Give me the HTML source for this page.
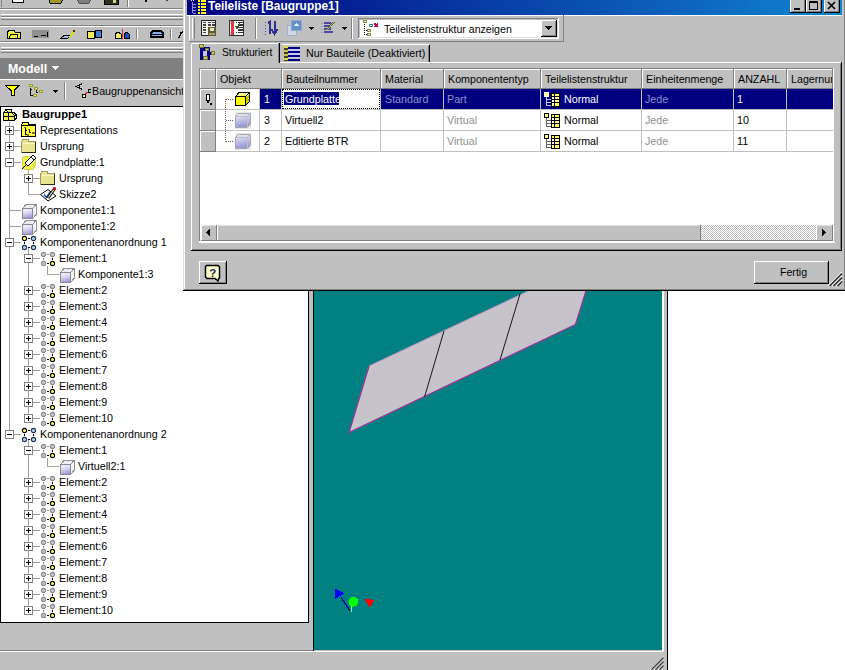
<!DOCTYPE html><html><head><meta charset="utf-8"><style>
html,body{margin:0;padding:0}
body{width:845px;height:670px;position:relative;overflow:hidden;background:#c0c0c0;font-family:"Liberation Sans",sans-serif}
div{position:absolute}
.t{white-space:nowrap;line-height:13px}
</style></head><body>
<div style="left:1px;top:0px;width:1px;height:7px;background:#808080;"></div>
<svg style="position:absolute;left:12px;top:0px" width="12" height="3" viewBox="0 0 12 3" shape-rendering="crispEdges"><rect x="0.5" y="-2" width="11" height="4" fill="#fff" stroke="#000"/></svg>
<svg style="position:absolute;left:49px;top:0px" width="15" height="4" viewBox="0 0 15 4" shape-rendering="crispEdges"><path d="M0 -1 L14 -1 L12 3 L1 3 Z" fill="#9a9a20" stroke="#000"/></svg>
<svg style="position:absolute;left:76px;top:0px" width="16" height="4" viewBox="0 0 16 4" shape-rendering="crispEdges"><path d="M1 -1 L15 -1 L13 3 L3 3 Z" fill="#808080" stroke="#505050"/></svg>
<svg style="position:absolute;left:104px;top:0px" width="15" height="5" viewBox="0 0 15 5" shape-rendering="crispEdges"><rect x="0.5" y="-2" width="14" height="6" fill="#303018" stroke="#000"/><rect x="9" y="0" width="3" height="3" fill="#d0d0a0"/></svg>
<div style="left:128px;top:0px;width:1px;height:7px;background:#fff;"></div>
<div style="left:127px;top:0px;width:1px;height:7px;background:#808080;"></div>
<div style="left:145px;top:0px;width:2px;height:2px;background:#000;"></div>
<div style="left:166px;top:0px;width:2px;height:1px;background:#404040;"></div>
<div style="left:0px;top:8px;width:183px;height:1px;background:#808080;"></div>
<div style="left:0px;top:9px;width:183px;height:1px;background:#fff;"></div>
<div style="left:1px;top:14px;width:182px;height:1px;background:#fff;"></div>
<div style="left:1px;top:16px;width:182px;height:1px;background:#808080;"></div>
<div style="left:1px;top:17px;width:182px;height:1px;background:#fff;"></div>
<div style="left:1px;top:19px;width:182px;height:1px;background:#808080;"></div>
<div style="left:0px;top:25px;width:183px;height:1px;background:#808080;"></div>
<div style="left:0px;top:26px;width:183px;height:1px;background:#fff;"></div>
<svg style="position:absolute;left:6px;top:29px" width="16" height="11" viewBox="0 0 16 11" shape-rendering="crispEdges"><path d="M1 3 L4 1 L8 1 L9 3 L14 3 L14 9 L1 9 Z" fill="#f0f040" stroke="#000"/><path d="M3 9 L5 5 L11 5 L11 9" fill="none" stroke="#000"/></svg>
<div style="left:32px;top:30px;width:17px;height:8px;background:#909090;"></div>
<svg style="position:absolute;left:32px;top:30px" width="17" height="8" viewBox="0 0 17 8" shape-rendering="crispEdges"><path d="M2 6 L6 6 M9 5 L14 5 M15 2 L15 7" stroke="#000" fill="none"/></svg>
<svg style="position:absolute;left:60px;top:29px" width="16" height="11" viewBox="0 0 16 11" shape-rendering="crispEdges"><path d="M1 9 L5 6 L11 6 L8 9 Z" fill="#a0c0f0" stroke="#000"/><path d="M10 8 L15 1" stroke="#e0e000" stroke-width="2"/><circle cx="14" cy="2" r="1.5" fill="#602000"/></svg>
<svg style="position:absolute;left:87px;top:29px" width="16" height="10" viewBox="0 0 16 10" shape-rendering="crispEdges"><rect x="0.5" y="2.5" width="7" height="7" fill="#f0f060" stroke="#000"/><rect x="8.5" y="1.5" width="6" height="7" fill="#4080d0" stroke="#000"/></svg>
<svg style="position:absolute;left:114px;top:29px" width="16" height="11" viewBox="0 0 16 11" shape-rendering="crispEdges"><path d="M1 9 L1 5 L4 3 L7 5 L7 9 Z" fill="#f0f060" stroke="#000"/><path d="M10 9 L10 5 L13 3 L15 5 L15 9 Z" fill="#2050c0" stroke="#000"/><rect x="8" y="0" width="1" height="10" fill="#e03030"/></svg>
<div style="left:136px;top:29px;width:1px;height:10px;background:#808080;"></div>
<div style="left:137px;top:29px;width:1px;height:10px;background:#fff;"></div>
<svg style="position:absolute;left:149px;top:29px" width="16" height="10" viewBox="0 0 16 10" shape-rendering="crispEdges"><path d="M2 8 L2 4 L4 2 L12 2 L14 4 L14 8 Z" fill="#80b0f0" stroke="#000" stroke-width="1.5"/><path d="M2 5 L14 5" stroke="#000"/></svg>
<div style="left:170px;top:29px;width:1px;height:10px;background:#808080;"></div>
<div style="left:171px;top:29px;width:1px;height:10px;background:#fff;"></div>
<svg style="position:absolute;left:178px;top:31px" width="6" height="8" viewBox="0 0 6 8" shape-rendering="crispEdges"><path d="M1 7 L3 2 L5 1" stroke="#000" stroke-width="1.5" fill="none"/></svg>
<div style="left:0px;top:41px;width:183px;height:1px;background:#808080;"></div>
<div style="left:0px;top:42px;width:183px;height:1px;background:#fff;"></div>
<div style="left:1px;top:47px;width:182px;height:1px;background:#fff;"></div>
<div style="left:1px;top:49px;width:182px;height:1px;background:#808080;"></div>
<div style="left:1px;top:50px;width:182px;height:1px;background:#fff;"></div>
<div style="left:1px;top:52px;width:182px;height:1px;background:#808080;"></div>
<div style="left:0px;top:58px;width:308px;height:21px;background:#808080;"></div>
<div class="t" style="left:8px;top:61px;font-size:12.4px;color:#fff;font-weight:bold;line-height:16px">Modell</div>
<svg style="position:absolute;left:51px;top:66px" width="10" height="5" viewBox="0 0 10 5" shape-rendering="crispEdges"><path d="M0 0 L9 0 L4.5 4 Z" fill="#fff"/></svg>
<div style="left:0px;top:79px;width:308px;height:1px;background:#fff;"></div>
<svg style="position:absolute;left:5px;top:85px" width="15" height="11" viewBox="0 0 15 11" shape-rendering="crispEdges"><path d="M0.5 0.5 L14 0.5 L9 5.5 L9 10.5 L6 10.5 L6 5.5 Z" fill="#ffff00" stroke="#000"/></svg>
<svg style="position:absolute;left:28px;top:83px" width="16" height="14" viewBox="0 0 16 14" shape-rendering="crispEdges"><rect x="1.5" y="1.5" width="3" height="2" fill="#f0f070" stroke="#989828"/><rect x="6.5" y="4.5" width="3" height="2" fill="#f0f070" stroke="#989828"/><rect x="11.5" y="7.5" width="3" height="2" fill="#f0f070" stroke="#989828"/><rect x="5.5" y="11.5" width="3" height="2" fill="#f0f070" stroke="#989828"/><path d="M2.5 5 L2.5 12.5 L5 12.5 M2.5 6 L4 6 M8.5 7 L8.5 9.5 L10 9.5" stroke="#000" fill="none"/></svg>
<svg style="position:absolute;left:52px;top:90px" width="7" height="4" viewBox="0 0 7 4" shape-rendering="crispEdges"><path d="M0 0 L6 0 L3 3 Z" fill="#000"/></svg>
<div style="left:64px;top:82px;width:1px;height:18px;background:#808080;"></div>
<div style="left:65px;top:82px;width:1px;height:18px;background:#fff;"></div>
<svg style="position:absolute;left:75px;top:83px" width="16" height="16" viewBox="0 0 16 16" shape-rendering="crispEdges"><path d="M7.5 0.5 L1 3.5 L7.5 6.5 M4 2 L4 5" stroke="#000" fill="none"/><rect x="13.5" y="6.5" width="3" height="3" fill="#60d0b0" stroke="#000"/><rect x="7.5" y="11.5" width="3" height="3" fill="#ffff80" stroke="#000"/><path d="M10.5 11 L13 9" stroke="#e02020" stroke-width="1.2"/></svg>
<div class="t" style="left:92px;top:85px;font-size:10.7px;color:#000;font-weight:normal;">Baugruppenansicht</div>
<div style="left:0px;top:106px;width:309px;height:517px;background:#fff;"></div>
<div style="left:0px;top:106px;width:309px;height:1px;background:#000;"></div>
<div style="left:0px;top:622px;width:309px;height:1px;background:#000;"></div>
<div style="left:0px;top:106px;width:1px;height:517px;background:#000;"></div>
<div style="left:308px;top:106px;width:1px;height:517px;background:#000;"></div>
<div style="left:9px;top:122px;width:1px;height:312px;background:#a0a0a0;"></div>
<div style="left:28px;top:167px;width:1px;height:27px;background:#a0a0a0;"></div>
<div style="left:28px;top:247px;width:1px;height:171px;background:#a0a0a0;"></div>
<div style="left:28px;top:439px;width:1px;height:171px;background:#a0a0a0;"></div>
<div style="left:47px;top:266px;width:1px;height:8px;background:#a0a0a0;"></div>
<div style="left:47px;top:458px;width:1px;height:8px;background:#a0a0a0;"></div>
<svg style="position:absolute;left:2px;top:108px" width="16" height="14" viewBox="0 0 16 14" shape-rendering="crispEdges"><path d="M1.5 4.5 L4 1.5 L9.5 1.5 L9.5 4.5 L12 4.5 L14.5 7 L14.5 10 L12 12.5 L1.5 12.5 Z" fill="#f0f060" stroke="#000"/><path d="M1.5 8.5 L12 8.5 M6.5 4.5 L6.5 12.5 M1.5 4.5 L9.5 4.5 L12 7 L12 12.5 M12 7 L14.5 7 M4 1.5 L6.5 4.5" stroke="#000" fill="none"/></svg>
<div class="t" style="left:22px;top:108px;font-size:11.2px;color:#000;font-weight:bold;">Baugruppe1</div>
<div style="left:9px;top:130px;width:12px;height:1px;background:#a0a0a0;"></div>
<div style="left:5px;top:126px;width:9px;height:9px;background:#fff;box-sizing:border-box;border:1px solid #808080"></div>
<div style="left:7px;top:130px;width:5px;height:1px;background:#000;"></div>
<div style="left:9px;top:128px;width:1px;height:5px;background:#000;"></div>
<svg style="position:absolute;left:21px;top:122px" width="16" height="16" viewBox="0 0 16 16" shape-rendering="crispEdges"><path d="M0.5 2.5 L2 0.5 L7 0.5 L8 2.5 L14.5 2.5 L14.5 14.5 L0.5 14.5 Z" fill="#ffff40" stroke="#000"/><path d="M1 3.5 L14 3.5" stroke="#000"/><path d="M4 6 L4 12 L6 12 M4 8 L6 8" stroke="#000" fill="none"/><rect x="3" y="5" width="2" height="1" fill="#807020"/><rect x="7" y="7" width="2" height="1" fill="#807020"/><rect x="11" y="10" width="3" height="2" fill="#807020"/><rect x="6" y="12" width="2" height="2" fill="#807020"/><path d="M8 8 L8 10 L10 10" stroke="#000" fill="none"/></svg>
<div class="t" style="left:40px;top:124px;font-size:10.7px;color:#000;font-weight:normal;">Representations</div>
<div style="left:9px;top:146px;width:12px;height:1px;background:#a0a0a0;"></div>
<div style="left:5px;top:142px;width:9px;height:9px;background:#fff;box-sizing:border-box;border:1px solid #808080"></div>
<div style="left:7px;top:146px;width:5px;height:1px;background:#000;"></div>
<div style="left:9px;top:144px;width:1px;height:5px;background:#000;"></div>
<svg style="position:absolute;left:21px;top:139px" width="16" height="14" viewBox="0 0 16 14" shape-rendering="crispEdges"><path d="M0.5 2.5 L2 0.5 L7 0.5 L8 2.5 L14.5 2.5 L14.5 13.5 L0.5 13.5 Z" fill="#e8e490" stroke="#a09860"/><path d="M14.5 3 L14.5 13.5 L1 13.5" stroke="#302810" fill="none" stroke-width="1.2"/><path d="M1.5 4.5 L13.5 4.5" stroke="#fff8c0"/></svg>
<div class="t" style="left:40px;top:140px;font-size:10.7px;color:#000;font-weight:normal;">Ursprung</div>
<div style="left:9px;top:162px;width:12px;height:1px;background:#a0a0a0;"></div>
<div style="left:5px;top:158px;width:9px;height:9px;background:#fff;box-sizing:border-box;border:1px solid #808080"></div>
<div style="left:7px;top:162px;width:5px;height:1px;background:#000;"></div>
<svg style="position:absolute;left:21px;top:155px" width="15" height="15" viewBox="0 0 15 15" shape-rendering="crispEdges"><path d="M3 1 L12 1 L14 3 L14 11 L12 14 L3 14 L1 12 L1 3 Z" fill="#f0f050" stroke="#d0d040"/><path d="M1 14 L14 1" stroke="#000" stroke-width="1"/><path d="M4 8 L10 2 L13 5 L7 11 Z" fill="#fff" stroke="#000"/><path d="M10 2 L12 0 L15 3 L13 5" fill="#fff" stroke="#000"/></svg>
<div class="t" style="left:40px;top:156px;font-size:10.7px;color:#000;font-weight:normal;">Grundplatte:1</div>
<div style="left:28px;top:178px;width:12px;height:1px;background:#a0a0a0;"></div>
<div style="left:24px;top:174px;width:9px;height:9px;background:#fff;box-sizing:border-box;border:1px solid #808080"></div>
<div style="left:26px;top:178px;width:5px;height:1px;background:#000;"></div>
<div style="left:28px;top:176px;width:1px;height:5px;background:#000;"></div>
<svg style="position:absolute;left:40px;top:171px" width="16" height="14" viewBox="0 0 16 14" shape-rendering="crispEdges"><path d="M0.5 2.5 L2 0.5 L7 0.5 L8 2.5 L14.5 2.5 L14.5 13.5 L0.5 13.5 Z" fill="#e8e490" stroke="#a09860"/><path d="M14.5 3 L14.5 13.5 L1 13.5" stroke="#302810" fill="none" stroke-width="1.2"/><path d="M1.5 4.5 L13.5 4.5" stroke="#fff8c0"/></svg>
<div class="t" style="left:59px;top:172px;font-size:10.7px;color:#000;font-weight:normal;">Ursprung</div>
<div style="left:28px;top:194px;width:12px;height:1px;background:#a0a0a0;"></div>
<svg style="position:absolute;left:40px;top:187px" width="17" height="15" viewBox="0 0 17 15" shape-rendering="crispEdges"><path d="M0.5 7.5 L8 2.5 L16 9 L8 14 Z" fill="#fff" stroke="#000" shape-rendering="geometricPrecision"/><path d="M4 7.5 L6.5 10.5 L10 5" stroke="#2050b0" stroke-width="1.5" fill="none" shape-rendering="geometricPrecision"/><path d="M8 11 L14 2.5" stroke="#000" stroke-width="3" shape-rendering="geometricPrecision"/><path d="M8.3 10.5 L14 2.5" stroke="#f0e8b0" stroke-width="1.2" shape-rendering="geometricPrecision"/><circle cx="14.5" cy="1.8" r="1.8" fill="#c01818" shape-rendering="geometricPrecision"/></svg>
<div class="t" style="left:59px;top:188px;font-size:10.7px;color:#000;font-weight:normal;">Skizze2</div>
<div style="left:9px;top:210px;width:12px;height:1px;background:#a0a0a0;"></div>
<svg style="position:absolute;left:21px;top:204px" width="16" height="15" viewBox="0 0 16 15" shape-rendering="crispEdges"><defs><linearGradient id="cg_22" x1="0" y1="0" x2="0.25" y2="1"><stop offset="0" stop-color="#fafafe"/><stop offset="0.5" stop-color="#dcdaf0"/><stop offset="1" stop-color="#a49cd8"/></linearGradient></defs><path d="M1.5 4.5 L5 0.5 L15 0.5 L11.5 4.5 Z" fill="#ececf2" stroke="#909098"/><path d="M11.5 4.5 L15 0.5 L15 10.5 L11.5 14.5 Z" fill="#f4f4f8" stroke="#909098"/><rect x="1.5" y="4.5" width="10" height="10" fill="url(#cg_22)" stroke="#888894"/></svg>
<div class="t" style="left:40px;top:204px;font-size:10.7px;color:#000;font-weight:normal;">Komponente1:1</div>
<div style="left:9px;top:226px;width:12px;height:1px;background:#a0a0a0;"></div>
<svg style="position:absolute;left:21px;top:220px" width="16" height="15" viewBox="0 0 16 15" shape-rendering="crispEdges"><defs><linearGradient id="cg_23" x1="0" y1="0" x2="0.25" y2="1"><stop offset="0" stop-color="#fafafe"/><stop offset="0.5" stop-color="#dcdaf0"/><stop offset="1" stop-color="#a49cd8"/></linearGradient></defs><path d="M1.5 4.5 L5 0.5 L15 0.5 L11.5 4.5 Z" fill="#ececf2" stroke="#909098"/><path d="M11.5 4.5 L15 0.5 L15 10.5 L11.5 14.5 Z" fill="#f4f4f8" stroke="#909098"/><rect x="1.5" y="4.5" width="10" height="10" fill="url(#cg_23)" stroke="#888894"/></svg>
<div class="t" style="left:40px;top:220px;font-size:10.7px;color:#000;font-weight:normal;">Komponente1:2</div>
<div style="left:9px;top:242px;width:12px;height:1px;background:#a0a0a0;"></div>
<div style="left:5px;top:238px;width:9px;height:9px;background:#fff;box-sizing:border-box;border:1px solid #808080"></div>
<div style="left:7px;top:242px;width:5px;height:1px;background:#000;"></div>
<svg style="position:absolute;left:21px;top:235px" width="16" height="16" viewBox="0 0 16 16" shape-rendering="crispEdges"><circle cx="3.5" cy="3.5" r="2.1" fill="#ffff60" stroke="#000" stroke-width="1.1" shape-rendering="geometricPrecision"/><circle cx="12.5" cy="3.5" r="2.1" fill="#b8d8f0" stroke="#203050" stroke-width="1.1" shape-rendering="geometricPrecision"/><circle cx="3.5" cy="12.5" r="2.1" fill="#b8d8f0" stroke="#203050" stroke-width="1.1" shape-rendering="geometricPrecision"/><circle cx="12.5" cy="12.5" r="2.1" fill="#b8d8f0" stroke="#203050" stroke-width="1.1" shape-rendering="geometricPrecision"/><path d="M7 3 L9 3 M7 12 L9 12 M3 7 L3 9 M12 7 L12 9" stroke="#000"/></svg>
<div class="t" style="left:40px;top:236px;font-size:10.7px;color:#000;font-weight:normal;">Komponentenanordnung 1</div>
<div style="left:28px;top:258px;width:12px;height:1px;background:#a0a0a0;"></div>
<div style="left:24px;top:254px;width:9px;height:9px;background:#fff;box-sizing:border-box;border:1px solid #808080"></div>
<div style="left:26px;top:258px;width:5px;height:1px;background:#000;"></div>
<svg style="position:absolute;left:40px;top:251px" width="16" height="16" viewBox="0 0 16 16" shape-rendering="crispEdges"><circle cx="3.5" cy="3.5" r="2.1" fill="#c8c8c8" stroke="#8c8c8c" stroke-width="1.1" shape-rendering="geometricPrecision"/><circle cx="12.5" cy="3.5" r="2.1" fill="#c8c8c8" stroke="#8c8c8c" stroke-width="1.1" shape-rendering="geometricPrecision"/><circle cx="3.5" cy="12.5" r="2.1" fill="#c8c8c8" stroke="#8c8c8c" stroke-width="1.1" shape-rendering="geometricPrecision"/><circle cx="12.5" cy="12.5" r="2.1" fill="#ffff40" stroke="#000" stroke-width="1.1" shape-rendering="geometricPrecision"/><path d="M7 3 L9 3 M3 7 L3 9" stroke="#909090"/><path d="M7 12 L9 12 M12 7 L12 9" stroke="#000"/></svg>
<div class="t" style="left:59px;top:252px;font-size:10.7px;color:#000;font-weight:normal;">Element:1</div>
<div style="left:47px;top:274px;width:12px;height:1px;background:#a0a0a0;"></div>
<svg style="position:absolute;left:59px;top:268px" width="16" height="15" viewBox="0 0 16 15" shape-rendering="crispEdges"><defs><linearGradient id="cg_26" x1="0" y1="0" x2="0.25" y2="1"><stop offset="0" stop-color="#fafafe"/><stop offset="0.5" stop-color="#dcdaf0"/><stop offset="1" stop-color="#a49cd8"/></linearGradient></defs><path d="M1.5 4.5 L5 0.5 L15 0.5 L11.5 4.5 Z" fill="#ececf2" stroke="#909098"/><path d="M11.5 4.5 L15 0.5 L15 10.5 L11.5 14.5 Z" fill="#f4f4f8" stroke="#909098"/><rect x="1.5" y="4.5" width="10" height="10" fill="url(#cg_26)" stroke="#888894"/></svg>
<div class="t" style="left:78px;top:268px;font-size:10.7px;color:#000;font-weight:normal;">Komponente1:3</div>
<div style="left:28px;top:290px;width:12px;height:1px;background:#a0a0a0;"></div>
<div style="left:24px;top:286px;width:9px;height:9px;background:#fff;box-sizing:border-box;border:1px solid #808080"></div>
<div style="left:26px;top:290px;width:5px;height:1px;background:#000;"></div>
<div style="left:28px;top:288px;width:1px;height:5px;background:#000;"></div>
<svg style="position:absolute;left:40px;top:283px" width="16" height="16" viewBox="0 0 16 16" shape-rendering="crispEdges"><circle cx="3.5" cy="3.5" r="2.1" fill="#c8c8c8" stroke="#8c8c8c" stroke-width="1.1" shape-rendering="geometricPrecision"/><circle cx="12.5" cy="3.5" r="2.1" fill="#c8c8c8" stroke="#8c8c8c" stroke-width="1.1" shape-rendering="geometricPrecision"/><circle cx="3.5" cy="12.5" r="2.1" fill="#c8c8c8" stroke="#8c8c8c" stroke-width="1.1" shape-rendering="geometricPrecision"/><circle cx="12.5" cy="12.5" r="2.1" fill="#ffff40" stroke="#000" stroke-width="1.1" shape-rendering="geometricPrecision"/><path d="M7 3 L9 3 M3 7 L3 9" stroke="#909090"/><path d="M7 12 L9 12 M12 7 L12 9" stroke="#000"/></svg>
<div class="t" style="left:59px;top:284px;font-size:10.7px;color:#000;font-weight:normal;">Element:2</div>
<div style="left:28px;top:306px;width:12px;height:1px;background:#a0a0a0;"></div>
<div style="left:24px;top:302px;width:9px;height:9px;background:#fff;box-sizing:border-box;border:1px solid #808080"></div>
<div style="left:26px;top:306px;width:5px;height:1px;background:#000;"></div>
<div style="left:28px;top:304px;width:1px;height:5px;background:#000;"></div>
<svg style="position:absolute;left:40px;top:299px" width="16" height="16" viewBox="0 0 16 16" shape-rendering="crispEdges"><circle cx="3.5" cy="3.5" r="2.1" fill="#c8c8c8" stroke="#8c8c8c" stroke-width="1.1" shape-rendering="geometricPrecision"/><circle cx="12.5" cy="3.5" r="2.1" fill="#c8c8c8" stroke="#8c8c8c" stroke-width="1.1" shape-rendering="geometricPrecision"/><circle cx="3.5" cy="12.5" r="2.1" fill="#c8c8c8" stroke="#8c8c8c" stroke-width="1.1" shape-rendering="geometricPrecision"/><circle cx="12.5" cy="12.5" r="2.1" fill="#ffff40" stroke="#000" stroke-width="1.1" shape-rendering="geometricPrecision"/><path d="M7 3 L9 3 M3 7 L3 9" stroke="#909090"/><path d="M7 12 L9 12 M12 7 L12 9" stroke="#000"/></svg>
<div class="t" style="left:59px;top:300px;font-size:10.7px;color:#000;font-weight:normal;">Element:3</div>
<div style="left:28px;top:322px;width:12px;height:1px;background:#a0a0a0;"></div>
<div style="left:24px;top:318px;width:9px;height:9px;background:#fff;box-sizing:border-box;border:1px solid #808080"></div>
<div style="left:26px;top:322px;width:5px;height:1px;background:#000;"></div>
<div style="left:28px;top:320px;width:1px;height:5px;background:#000;"></div>
<svg style="position:absolute;left:40px;top:315px" width="16" height="16" viewBox="0 0 16 16" shape-rendering="crispEdges"><circle cx="3.5" cy="3.5" r="2.1" fill="#c8c8c8" stroke="#8c8c8c" stroke-width="1.1" shape-rendering="geometricPrecision"/><circle cx="12.5" cy="3.5" r="2.1" fill="#c8c8c8" stroke="#8c8c8c" stroke-width="1.1" shape-rendering="geometricPrecision"/><circle cx="3.5" cy="12.5" r="2.1" fill="#c8c8c8" stroke="#8c8c8c" stroke-width="1.1" shape-rendering="geometricPrecision"/><circle cx="12.5" cy="12.5" r="2.1" fill="#ffff40" stroke="#000" stroke-width="1.1" shape-rendering="geometricPrecision"/><path d="M7 3 L9 3 M3 7 L3 9" stroke="#909090"/><path d="M7 12 L9 12 M12 7 L12 9" stroke="#000"/></svg>
<div class="t" style="left:59px;top:316px;font-size:10.7px;color:#000;font-weight:normal;">Element:4</div>
<div style="left:28px;top:338px;width:12px;height:1px;background:#a0a0a0;"></div>
<div style="left:24px;top:334px;width:9px;height:9px;background:#fff;box-sizing:border-box;border:1px solid #808080"></div>
<div style="left:26px;top:338px;width:5px;height:1px;background:#000;"></div>
<div style="left:28px;top:336px;width:1px;height:5px;background:#000;"></div>
<svg style="position:absolute;left:40px;top:331px" width="16" height="16" viewBox="0 0 16 16" shape-rendering="crispEdges"><circle cx="3.5" cy="3.5" r="2.1" fill="#c8c8c8" stroke="#8c8c8c" stroke-width="1.1" shape-rendering="geometricPrecision"/><circle cx="12.5" cy="3.5" r="2.1" fill="#c8c8c8" stroke="#8c8c8c" stroke-width="1.1" shape-rendering="geometricPrecision"/><circle cx="3.5" cy="12.5" r="2.1" fill="#c8c8c8" stroke="#8c8c8c" stroke-width="1.1" shape-rendering="geometricPrecision"/><circle cx="12.5" cy="12.5" r="2.1" fill="#ffff40" stroke="#000" stroke-width="1.1" shape-rendering="geometricPrecision"/><path d="M7 3 L9 3 M3 7 L3 9" stroke="#909090"/><path d="M7 12 L9 12 M12 7 L12 9" stroke="#000"/></svg>
<div class="t" style="left:59px;top:332px;font-size:10.7px;color:#000;font-weight:normal;">Element:5</div>
<div style="left:28px;top:354px;width:12px;height:1px;background:#a0a0a0;"></div>
<div style="left:24px;top:350px;width:9px;height:9px;background:#fff;box-sizing:border-box;border:1px solid #808080"></div>
<div style="left:26px;top:354px;width:5px;height:1px;background:#000;"></div>
<div style="left:28px;top:352px;width:1px;height:5px;background:#000;"></div>
<svg style="position:absolute;left:40px;top:347px" width="16" height="16" viewBox="0 0 16 16" shape-rendering="crispEdges"><circle cx="3.5" cy="3.5" r="2.1" fill="#c8c8c8" stroke="#8c8c8c" stroke-width="1.1" shape-rendering="geometricPrecision"/><circle cx="12.5" cy="3.5" r="2.1" fill="#c8c8c8" stroke="#8c8c8c" stroke-width="1.1" shape-rendering="geometricPrecision"/><circle cx="3.5" cy="12.5" r="2.1" fill="#c8c8c8" stroke="#8c8c8c" stroke-width="1.1" shape-rendering="geometricPrecision"/><circle cx="12.5" cy="12.5" r="2.1" fill="#ffff40" stroke="#000" stroke-width="1.1" shape-rendering="geometricPrecision"/><path d="M7 3 L9 3 M3 7 L3 9" stroke="#909090"/><path d="M7 12 L9 12 M12 7 L12 9" stroke="#000"/></svg>
<div class="t" style="left:59px;top:348px;font-size:10.7px;color:#000;font-weight:normal;">Element:6</div>
<div style="left:28px;top:370px;width:12px;height:1px;background:#a0a0a0;"></div>
<div style="left:24px;top:366px;width:9px;height:9px;background:#fff;box-sizing:border-box;border:1px solid #808080"></div>
<div style="left:26px;top:370px;width:5px;height:1px;background:#000;"></div>
<div style="left:28px;top:368px;width:1px;height:5px;background:#000;"></div>
<svg style="position:absolute;left:40px;top:363px" width="16" height="16" viewBox="0 0 16 16" shape-rendering="crispEdges"><circle cx="3.5" cy="3.5" r="2.1" fill="#c8c8c8" stroke="#8c8c8c" stroke-width="1.1" shape-rendering="geometricPrecision"/><circle cx="12.5" cy="3.5" r="2.1" fill="#c8c8c8" stroke="#8c8c8c" stroke-width="1.1" shape-rendering="geometricPrecision"/><circle cx="3.5" cy="12.5" r="2.1" fill="#c8c8c8" stroke="#8c8c8c" stroke-width="1.1" shape-rendering="geometricPrecision"/><circle cx="12.5" cy="12.5" r="2.1" fill="#ffff40" stroke="#000" stroke-width="1.1" shape-rendering="geometricPrecision"/><path d="M7 3 L9 3 M3 7 L3 9" stroke="#909090"/><path d="M7 12 L9 12 M12 7 L12 9" stroke="#000"/></svg>
<div class="t" style="left:59px;top:364px;font-size:10.7px;color:#000;font-weight:normal;">Element:7</div>
<div style="left:28px;top:386px;width:12px;height:1px;background:#a0a0a0;"></div>
<div style="left:24px;top:382px;width:9px;height:9px;background:#fff;box-sizing:border-box;border:1px solid #808080"></div>
<div style="left:26px;top:386px;width:5px;height:1px;background:#000;"></div>
<div style="left:28px;top:384px;width:1px;height:5px;background:#000;"></div>
<svg style="position:absolute;left:40px;top:379px" width="16" height="16" viewBox="0 0 16 16" shape-rendering="crispEdges"><circle cx="3.5" cy="3.5" r="2.1" fill="#c8c8c8" stroke="#8c8c8c" stroke-width="1.1" shape-rendering="geometricPrecision"/><circle cx="12.5" cy="3.5" r="2.1" fill="#c8c8c8" stroke="#8c8c8c" stroke-width="1.1" shape-rendering="geometricPrecision"/><circle cx="3.5" cy="12.5" r="2.1" fill="#c8c8c8" stroke="#8c8c8c" stroke-width="1.1" shape-rendering="geometricPrecision"/><circle cx="12.5" cy="12.5" r="2.1" fill="#ffff40" stroke="#000" stroke-width="1.1" shape-rendering="geometricPrecision"/><path d="M7 3 L9 3 M3 7 L3 9" stroke="#909090"/><path d="M7 12 L9 12 M12 7 L12 9" stroke="#000"/></svg>
<div class="t" style="left:59px;top:380px;font-size:10.7px;color:#000;font-weight:normal;">Element:8</div>
<div style="left:28px;top:402px;width:12px;height:1px;background:#a0a0a0;"></div>
<div style="left:24px;top:398px;width:9px;height:9px;background:#fff;box-sizing:border-box;border:1px solid #808080"></div>
<div style="left:26px;top:402px;width:5px;height:1px;background:#000;"></div>
<div style="left:28px;top:400px;width:1px;height:5px;background:#000;"></div>
<svg style="position:absolute;left:40px;top:395px" width="16" height="16" viewBox="0 0 16 16" shape-rendering="crispEdges"><circle cx="3.5" cy="3.5" r="2.1" fill="#c8c8c8" stroke="#8c8c8c" stroke-width="1.1" shape-rendering="geometricPrecision"/><circle cx="12.5" cy="3.5" r="2.1" fill="#c8c8c8" stroke="#8c8c8c" stroke-width="1.1" shape-rendering="geometricPrecision"/><circle cx="3.5" cy="12.5" r="2.1" fill="#c8c8c8" stroke="#8c8c8c" stroke-width="1.1" shape-rendering="geometricPrecision"/><circle cx="12.5" cy="12.5" r="2.1" fill="#ffff40" stroke="#000" stroke-width="1.1" shape-rendering="geometricPrecision"/><path d="M7 3 L9 3 M3 7 L3 9" stroke="#909090"/><path d="M7 12 L9 12 M12 7 L12 9" stroke="#000"/></svg>
<div class="t" style="left:59px;top:396px;font-size:10.7px;color:#000;font-weight:normal;">Element:9</div>
<div style="left:28px;top:418px;width:12px;height:1px;background:#a0a0a0;"></div>
<div style="left:24px;top:414px;width:9px;height:9px;background:#fff;box-sizing:border-box;border:1px solid #808080"></div>
<div style="left:26px;top:418px;width:5px;height:1px;background:#000;"></div>
<div style="left:28px;top:416px;width:1px;height:5px;background:#000;"></div>
<svg style="position:absolute;left:40px;top:411px" width="16" height="16" viewBox="0 0 16 16" shape-rendering="crispEdges"><circle cx="3.5" cy="3.5" r="2.1" fill="#c8c8c8" stroke="#8c8c8c" stroke-width="1.1" shape-rendering="geometricPrecision"/><circle cx="12.5" cy="3.5" r="2.1" fill="#c8c8c8" stroke="#8c8c8c" stroke-width="1.1" shape-rendering="geometricPrecision"/><circle cx="3.5" cy="12.5" r="2.1" fill="#c8c8c8" stroke="#8c8c8c" stroke-width="1.1" shape-rendering="geometricPrecision"/><circle cx="12.5" cy="12.5" r="2.1" fill="#ffff40" stroke="#000" stroke-width="1.1" shape-rendering="geometricPrecision"/><path d="M7 3 L9 3 M3 7 L3 9" stroke="#909090"/><path d="M7 12 L9 12 M12 7 L12 9" stroke="#000"/></svg>
<div class="t" style="left:59px;top:412px;font-size:10.7px;color:#000;font-weight:normal;">Element:10</div>
<div style="left:9px;top:434px;width:12px;height:1px;background:#a0a0a0;"></div>
<div style="left:5px;top:430px;width:9px;height:9px;background:#fff;box-sizing:border-box;border:1px solid #808080"></div>
<div style="left:7px;top:434px;width:5px;height:1px;background:#000;"></div>
<svg style="position:absolute;left:21px;top:427px" width="16" height="16" viewBox="0 0 16 16" shape-rendering="crispEdges"><circle cx="3.5" cy="3.5" r="2.1" fill="#ffff60" stroke="#000" stroke-width="1.1" shape-rendering="geometricPrecision"/><circle cx="12.5" cy="3.5" r="2.1" fill="#b8d8f0" stroke="#203050" stroke-width="1.1" shape-rendering="geometricPrecision"/><circle cx="3.5" cy="12.5" r="2.1" fill="#b8d8f0" stroke="#203050" stroke-width="1.1" shape-rendering="geometricPrecision"/><circle cx="12.5" cy="12.5" r="2.1" fill="#b8d8f0" stroke="#203050" stroke-width="1.1" shape-rendering="geometricPrecision"/><path d="M7 3 L9 3 M7 12 L9 12 M3 7 L3 9 M12 7 L12 9" stroke="#000"/></svg>
<div class="t" style="left:40px;top:428px;font-size:10.7px;color:#000;font-weight:normal;">Komponentenanordnung 2</div>
<div style="left:28px;top:450px;width:12px;height:1px;background:#a0a0a0;"></div>
<div style="left:24px;top:446px;width:9px;height:9px;background:#fff;box-sizing:border-box;border:1px solid #808080"></div>
<div style="left:26px;top:450px;width:5px;height:1px;background:#000;"></div>
<svg style="position:absolute;left:40px;top:443px" width="16" height="16" viewBox="0 0 16 16" shape-rendering="crispEdges"><circle cx="3.5" cy="3.5" r="2.1" fill="#c8c8c8" stroke="#8c8c8c" stroke-width="1.1" shape-rendering="geometricPrecision"/><circle cx="12.5" cy="3.5" r="2.1" fill="#c8c8c8" stroke="#8c8c8c" stroke-width="1.1" shape-rendering="geometricPrecision"/><circle cx="3.5" cy="12.5" r="2.1" fill="#c8c8c8" stroke="#8c8c8c" stroke-width="1.1" shape-rendering="geometricPrecision"/><circle cx="12.5" cy="12.5" r="2.1" fill="#ffff40" stroke="#000" stroke-width="1.1" shape-rendering="geometricPrecision"/><path d="M7 3 L9 3 M3 7 L3 9" stroke="#909090"/><path d="M7 12 L9 12 M12 7 L12 9" stroke="#000"/></svg>
<div class="t" style="left:59px;top:444px;font-size:10.7px;color:#000;font-weight:normal;">Element:1</div>
<div style="left:47px;top:466px;width:12px;height:1px;background:#a0a0a0;"></div>
<svg style="position:absolute;left:59px;top:460px" width="16" height="15" viewBox="0 0 16 15" shape-rendering="crispEdges"><defs><linearGradient id="cg_38" x1="0" y1="0" x2="0.25" y2="1"><stop offset="0" stop-color="#fafafe"/><stop offset="0.5" stop-color="#dcdaf0"/><stop offset="1" stop-color="#a49cd8"/></linearGradient></defs><path d="M1.5 4.5 L5 0.5 L15 0.5 L11.5 4.5 Z" fill="#ececf2" stroke="#909098"/><path d="M11.5 4.5 L15 0.5 L15 10.5 L11.5 14.5 Z" fill="#f4f4f8" stroke="#909098"/><rect x="1.5" y="4.5" width="10" height="10" fill="url(#cg_38)" stroke="#888894"/></svg>
<div class="t" style="left:78px;top:460px;font-size:10.7px;color:#000;font-weight:normal;">Virtuell2:1</div>
<div style="left:28px;top:482px;width:12px;height:1px;background:#a0a0a0;"></div>
<div style="left:24px;top:478px;width:9px;height:9px;background:#fff;box-sizing:border-box;border:1px solid #808080"></div>
<div style="left:26px;top:482px;width:5px;height:1px;background:#000;"></div>
<div style="left:28px;top:480px;width:1px;height:5px;background:#000;"></div>
<svg style="position:absolute;left:40px;top:475px" width="16" height="16" viewBox="0 0 16 16" shape-rendering="crispEdges"><circle cx="3.5" cy="3.5" r="2.1" fill="#c8c8c8" stroke="#8c8c8c" stroke-width="1.1" shape-rendering="geometricPrecision"/><circle cx="12.5" cy="3.5" r="2.1" fill="#c8c8c8" stroke="#8c8c8c" stroke-width="1.1" shape-rendering="geometricPrecision"/><circle cx="3.5" cy="12.5" r="2.1" fill="#c8c8c8" stroke="#8c8c8c" stroke-width="1.1" shape-rendering="geometricPrecision"/><circle cx="12.5" cy="12.5" r="2.1" fill="#ffff40" stroke="#000" stroke-width="1.1" shape-rendering="geometricPrecision"/><path d="M7 3 L9 3 M3 7 L3 9" stroke="#909090"/><path d="M7 12 L9 12 M12 7 L12 9" stroke="#000"/></svg>
<div class="t" style="left:59px;top:476px;font-size:10.7px;color:#000;font-weight:normal;">Element:2</div>
<div style="left:28px;top:498px;width:12px;height:1px;background:#a0a0a0;"></div>
<div style="left:24px;top:494px;width:9px;height:9px;background:#fff;box-sizing:border-box;border:1px solid #808080"></div>
<div style="left:26px;top:498px;width:5px;height:1px;background:#000;"></div>
<div style="left:28px;top:496px;width:1px;height:5px;background:#000;"></div>
<svg style="position:absolute;left:40px;top:491px" width="16" height="16" viewBox="0 0 16 16" shape-rendering="crispEdges"><circle cx="3.5" cy="3.5" r="2.1" fill="#c8c8c8" stroke="#8c8c8c" stroke-width="1.1" shape-rendering="geometricPrecision"/><circle cx="12.5" cy="3.5" r="2.1" fill="#c8c8c8" stroke="#8c8c8c" stroke-width="1.1" shape-rendering="geometricPrecision"/><circle cx="3.5" cy="12.5" r="2.1" fill="#c8c8c8" stroke="#8c8c8c" stroke-width="1.1" shape-rendering="geometricPrecision"/><circle cx="12.5" cy="12.5" r="2.1" fill="#ffff40" stroke="#000" stroke-width="1.1" shape-rendering="geometricPrecision"/><path d="M7 3 L9 3 M3 7 L3 9" stroke="#909090"/><path d="M7 12 L9 12 M12 7 L12 9" stroke="#000"/></svg>
<div class="t" style="left:59px;top:492px;font-size:10.7px;color:#000;font-weight:normal;">Element:3</div>
<div style="left:28px;top:514px;width:12px;height:1px;background:#a0a0a0;"></div>
<div style="left:24px;top:510px;width:9px;height:9px;background:#fff;box-sizing:border-box;border:1px solid #808080"></div>
<div style="left:26px;top:514px;width:5px;height:1px;background:#000;"></div>
<div style="left:28px;top:512px;width:1px;height:5px;background:#000;"></div>
<svg style="position:absolute;left:40px;top:507px" width="16" height="16" viewBox="0 0 16 16" shape-rendering="crispEdges"><circle cx="3.5" cy="3.5" r="2.1" fill="#c8c8c8" stroke="#8c8c8c" stroke-width="1.1" shape-rendering="geometricPrecision"/><circle cx="12.5" cy="3.5" r="2.1" fill="#c8c8c8" stroke="#8c8c8c" stroke-width="1.1" shape-rendering="geometricPrecision"/><circle cx="3.5" cy="12.5" r="2.1" fill="#c8c8c8" stroke="#8c8c8c" stroke-width="1.1" shape-rendering="geometricPrecision"/><circle cx="12.5" cy="12.5" r="2.1" fill="#ffff40" stroke="#000" stroke-width="1.1" shape-rendering="geometricPrecision"/><path d="M7 3 L9 3 M3 7 L3 9" stroke="#909090"/><path d="M7 12 L9 12 M12 7 L12 9" stroke="#000"/></svg>
<div class="t" style="left:59px;top:508px;font-size:10.7px;color:#000;font-weight:normal;">Element:4</div>
<div style="left:28px;top:530px;width:12px;height:1px;background:#a0a0a0;"></div>
<div style="left:24px;top:526px;width:9px;height:9px;background:#fff;box-sizing:border-box;border:1px solid #808080"></div>
<div style="left:26px;top:530px;width:5px;height:1px;background:#000;"></div>
<div style="left:28px;top:528px;width:1px;height:5px;background:#000;"></div>
<svg style="position:absolute;left:40px;top:523px" width="16" height="16" viewBox="0 0 16 16" shape-rendering="crispEdges"><circle cx="3.5" cy="3.5" r="2.1" fill="#c8c8c8" stroke="#8c8c8c" stroke-width="1.1" shape-rendering="geometricPrecision"/><circle cx="12.5" cy="3.5" r="2.1" fill="#c8c8c8" stroke="#8c8c8c" stroke-width="1.1" shape-rendering="geometricPrecision"/><circle cx="3.5" cy="12.5" r="2.1" fill="#c8c8c8" stroke="#8c8c8c" stroke-width="1.1" shape-rendering="geometricPrecision"/><circle cx="12.5" cy="12.5" r="2.1" fill="#ffff40" stroke="#000" stroke-width="1.1" shape-rendering="geometricPrecision"/><path d="M7 3 L9 3 M3 7 L3 9" stroke="#909090"/><path d="M7 12 L9 12 M12 7 L12 9" stroke="#000"/></svg>
<div class="t" style="left:59px;top:524px;font-size:10.7px;color:#000;font-weight:normal;">Element:5</div>
<div style="left:28px;top:546px;width:12px;height:1px;background:#a0a0a0;"></div>
<div style="left:24px;top:542px;width:9px;height:9px;background:#fff;box-sizing:border-box;border:1px solid #808080"></div>
<div style="left:26px;top:546px;width:5px;height:1px;background:#000;"></div>
<div style="left:28px;top:544px;width:1px;height:5px;background:#000;"></div>
<svg style="position:absolute;left:40px;top:539px" width="16" height="16" viewBox="0 0 16 16" shape-rendering="crispEdges"><circle cx="3.5" cy="3.5" r="2.1" fill="#c8c8c8" stroke="#8c8c8c" stroke-width="1.1" shape-rendering="geometricPrecision"/><circle cx="12.5" cy="3.5" r="2.1" fill="#c8c8c8" stroke="#8c8c8c" stroke-width="1.1" shape-rendering="geometricPrecision"/><circle cx="3.5" cy="12.5" r="2.1" fill="#c8c8c8" stroke="#8c8c8c" stroke-width="1.1" shape-rendering="geometricPrecision"/><circle cx="12.5" cy="12.5" r="2.1" fill="#ffff40" stroke="#000" stroke-width="1.1" shape-rendering="geometricPrecision"/><path d="M7 3 L9 3 M3 7 L3 9" stroke="#909090"/><path d="M7 12 L9 12 M12 7 L12 9" stroke="#000"/></svg>
<div class="t" style="left:59px;top:540px;font-size:10.7px;color:#000;font-weight:normal;">Element:6</div>
<div style="left:28px;top:562px;width:12px;height:1px;background:#a0a0a0;"></div>
<div style="left:24px;top:558px;width:9px;height:9px;background:#fff;box-sizing:border-box;border:1px solid #808080"></div>
<div style="left:26px;top:562px;width:5px;height:1px;background:#000;"></div>
<div style="left:28px;top:560px;width:1px;height:5px;background:#000;"></div>
<svg style="position:absolute;left:40px;top:555px" width="16" height="16" viewBox="0 0 16 16" shape-rendering="crispEdges"><circle cx="3.5" cy="3.5" r="2.1" fill="#c8c8c8" stroke="#8c8c8c" stroke-width="1.1" shape-rendering="geometricPrecision"/><circle cx="12.5" cy="3.5" r="2.1" fill="#c8c8c8" stroke="#8c8c8c" stroke-width="1.1" shape-rendering="geometricPrecision"/><circle cx="3.5" cy="12.5" r="2.1" fill="#c8c8c8" stroke="#8c8c8c" stroke-width="1.1" shape-rendering="geometricPrecision"/><circle cx="12.5" cy="12.5" r="2.1" fill="#ffff40" stroke="#000" stroke-width="1.1" shape-rendering="geometricPrecision"/><path d="M7 3 L9 3 M3 7 L3 9" stroke="#909090"/><path d="M7 12 L9 12 M12 7 L12 9" stroke="#000"/></svg>
<div class="t" style="left:59px;top:556px;font-size:10.7px;color:#000;font-weight:normal;">Element:7</div>
<div style="left:28px;top:578px;width:12px;height:1px;background:#a0a0a0;"></div>
<div style="left:24px;top:574px;width:9px;height:9px;background:#fff;box-sizing:border-box;border:1px solid #808080"></div>
<div style="left:26px;top:578px;width:5px;height:1px;background:#000;"></div>
<div style="left:28px;top:576px;width:1px;height:5px;background:#000;"></div>
<svg style="position:absolute;left:40px;top:571px" width="16" height="16" viewBox="0 0 16 16" shape-rendering="crispEdges"><circle cx="3.5" cy="3.5" r="2.1" fill="#c8c8c8" stroke="#8c8c8c" stroke-width="1.1" shape-rendering="geometricPrecision"/><circle cx="12.5" cy="3.5" r="2.1" fill="#c8c8c8" stroke="#8c8c8c" stroke-width="1.1" shape-rendering="geometricPrecision"/><circle cx="3.5" cy="12.5" r="2.1" fill="#c8c8c8" stroke="#8c8c8c" stroke-width="1.1" shape-rendering="geometricPrecision"/><circle cx="12.5" cy="12.5" r="2.1" fill="#ffff40" stroke="#000" stroke-width="1.1" shape-rendering="geometricPrecision"/><path d="M7 3 L9 3 M3 7 L3 9" stroke="#909090"/><path d="M7 12 L9 12 M12 7 L12 9" stroke="#000"/></svg>
<div class="t" style="left:59px;top:572px;font-size:10.7px;color:#000;font-weight:normal;">Element:8</div>
<div style="left:28px;top:594px;width:12px;height:1px;background:#a0a0a0;"></div>
<div style="left:24px;top:590px;width:9px;height:9px;background:#fff;box-sizing:border-box;border:1px solid #808080"></div>
<div style="left:26px;top:594px;width:5px;height:1px;background:#000;"></div>
<div style="left:28px;top:592px;width:1px;height:5px;background:#000;"></div>
<svg style="position:absolute;left:40px;top:587px" width="16" height="16" viewBox="0 0 16 16" shape-rendering="crispEdges"><circle cx="3.5" cy="3.5" r="2.1" fill="#c8c8c8" stroke="#8c8c8c" stroke-width="1.1" shape-rendering="geometricPrecision"/><circle cx="12.5" cy="3.5" r="2.1" fill="#c8c8c8" stroke="#8c8c8c" stroke-width="1.1" shape-rendering="geometricPrecision"/><circle cx="3.5" cy="12.5" r="2.1" fill="#c8c8c8" stroke="#8c8c8c" stroke-width="1.1" shape-rendering="geometricPrecision"/><circle cx="12.5" cy="12.5" r="2.1" fill="#ffff40" stroke="#000" stroke-width="1.1" shape-rendering="geometricPrecision"/><path d="M7 3 L9 3 M3 7 L3 9" stroke="#909090"/><path d="M7 12 L9 12 M12 7 L12 9" stroke="#000"/></svg>
<div class="t" style="left:59px;top:588px;font-size:10.7px;color:#000;font-weight:normal;">Element:9</div>
<div style="left:28px;top:610px;width:12px;height:1px;background:#a0a0a0;"></div>
<div style="left:24px;top:606px;width:9px;height:9px;background:#fff;box-sizing:border-box;border:1px solid #808080"></div>
<div style="left:26px;top:610px;width:5px;height:1px;background:#000;"></div>
<div style="left:28px;top:608px;width:1px;height:5px;background:#000;"></div>
<svg style="position:absolute;left:40px;top:603px" width="16" height="16" viewBox="0 0 16 16" shape-rendering="crispEdges"><circle cx="3.5" cy="3.5" r="2.1" fill="#c8c8c8" stroke="#8c8c8c" stroke-width="1.1" shape-rendering="geometricPrecision"/><circle cx="12.5" cy="3.5" r="2.1" fill="#c8c8c8" stroke="#8c8c8c" stroke-width="1.1" shape-rendering="geometricPrecision"/><circle cx="3.5" cy="12.5" r="2.1" fill="#c8c8c8" stroke="#8c8c8c" stroke-width="1.1" shape-rendering="geometricPrecision"/><circle cx="12.5" cy="12.5" r="2.1" fill="#ffff40" stroke="#000" stroke-width="1.1" shape-rendering="geometricPrecision"/><path d="M7 3 L9 3 M3 7 L3 9" stroke="#909090"/><path d="M7 12 L9 12 M12 7 L12 9" stroke="#000"/></svg>
<div class="t" style="left:59px;top:604px;font-size:10.7px;color:#000;font-weight:normal;">Element:10</div>
<div style="left:309px;top:106px;width:4px;height:517px;background:#c0c0c0;"></div>
<div style="left:313px;top:0px;width:1px;height:651px;background:#000;"></div>
<div style="left:314px;top:0px;width:348px;height:650px;background:#008080;"></div>
<div style="left:662px;top:0px;width:2px;height:652px;background:#fff;"></div>
<div style="left:0px;top:650px;width:313px;height:1px;background:#808080;"></div>
<div style="left:0px;top:651px;width:664px;height:1px;background:#fff;"></div>
<div style="left:667px;top:0px;width:1px;height:670px;background:#000;"></div>
<div style="left:668px;top:0px;width:177px;height:670px;background:#fff;"></div>
<svg style="position:absolute;left:314px;top:250px" width="348" height="200" viewBox="0 0 348 200" shape-rendering="crispEdges"><polygon points="35,182.5 55,116 282,9 261.5,74.5" fill="#c6c3ca" stroke="#b890c0" stroke-width="1" shape-rendering="geometricPrecision"/><path d="M55,116 L35,182.5 L261.5,74.5 L282,9" fill="none" stroke="#8a3a90" stroke-width="1.3" shape-rendering="geometricPrecision"/><path d="M130,81 L110.5,147 M206,44 L186,110" stroke="#201028" stroke-width="1" shape-rendering="geometricPrecision"/></svg>
<svg style="position:absolute;left:330px;top:585px" width="50" height="30" viewBox="0 0 50 30" shape-rendering="crispEdges"><path d="M5 3.5 L14.5 8.5 L5 14 Z" fill="#0000ff"/><path d="M11 12 L20 26" stroke="#0000a0" stroke-width="1.3"/><circle cx="23.4" cy="16.7" r="5" fill="#00ff00"/><path d="M22 21 L21 27" stroke="#80ff80"/><path d="M34.4 13.8 L44.7 14.9 L39.7 22.7 Z" fill="#ff0000"/></svg>
<svg style="position:absolute;left:650px;top:656px" width="14" height="14" viewBox="0 0 14 14" shape-rendering="crispEdges"><path d="M13.5 0.5 L0.5 13.5 M13.5 4.5 L4.5 13.5 M13.5 8.5 L8.5 13.5" stroke="#fff" shape-rendering="geometricPrecision"/><path d="M13.5 1.5 L1.5 13.5 M13.5 5.5 L5.5 13.5 M13.5 9.5 L9.5 13.5" stroke="#404040" stroke-width="1.4" shape-rendering="geometricPrecision"/></svg>
<div style="left:183px;top:0px;width:662px;height:291px;background:#c0c0c0;"></div>
<div style="left:183px;top:0px;width:1px;height:290px;background:#dfdfdf;"></div>
<div style="left:184px;top:0px;width:1px;height:289px;background:#fff;"></div>
<div style="left:183px;top:290px;width:662px;height:1px;background:#000;"></div>
<div style="left:184px;top:289px;width:660px;height:1px;background:#808080;"></div>
<div style="left:844px;top:0px;width:1px;height:290px;background:#808080;"></div>
<div style="left:187px;top:0px;width:655px;height:15px;background:linear-gradient(to right,#000080,#1084d0);"></div>
<svg style="position:absolute;left:190px;top:0px" width="16" height="14" viewBox="0 0 16 14" shape-rendering="crispEdges"><path d="M2.5 2 L2.5 13 M2.5 4.5 L6 4.5 M2.5 7.5 L6 7.5 M2.5 10.5 L6 10.5 M2.5 13 L6 13" stroke="#9090e0"/><rect x="1" y="0" width="1" height="1" fill="#fff"/><rect x="3" y="0" width="1" height="1" fill="#fff"/><rect x="8" y="0" width="2" height="2" fill="#ffff00"/><rect x="8" y="3" width="2" height="2" fill="#ffff00"/><rect x="8" y="6" width="2" height="2" fill="#ffff00"/><rect x="8" y="9" width="2" height="2" fill="#ffff00"/><rect x="8" y="12" width="2" height="2" fill="#ffff00"/><rect x="11" y="0" width="5" height="2" fill="#ffff00"/><rect x="11" y="3" width="5" height="2" fill="#ffff00"/><rect x="11" y="6" width="5" height="2" fill="#ffff00"/><rect x="11" y="9" width="5" height="2" fill="#ffff00"/><rect x="11" y="12" width="5" height="2" fill="#ffff00"/></svg>
<div class="t" style="left:208px;top:-1px;font-size:11.9px;color:#fff;font-weight:bold;line-height:15px">Teileliste [Baugruppe1]</div>
<div style="left:790px;top:-1px;width:16px;height:14px;background:#c0c0c0;"></div>
<div style="left:790px;top:-1px;width:16px;height:1px;background:#fff;"></div>
<div style="left:790px;top:-1px;width:1px;height:14px;background:#fff;"></div>
<div style="left:790px;top:12px;width:16px;height:1px;background:#000;"></div>
<div style="left:805px;top:-1px;width:1px;height:14px;background:#000;"></div>
<div style="left:791px;top:11px;width:14px;height:1px;background:#808080;"></div>
<div style="left:804px;top:0px;width:1px;height:12px;background:#808080;"></div>
<div style="left:806px;top:-1px;width:16px;height:14px;background:#c0c0c0;"></div>
<div style="left:806px;top:-1px;width:16px;height:1px;background:#fff;"></div>
<div style="left:806px;top:-1px;width:1px;height:14px;background:#fff;"></div>
<div style="left:806px;top:12px;width:16px;height:1px;background:#000;"></div>
<div style="left:821px;top:-1px;width:1px;height:14px;background:#000;"></div>
<div style="left:807px;top:11px;width:14px;height:1px;background:#808080;"></div>
<div style="left:820px;top:0px;width:1px;height:12px;background:#808080;"></div>
<div style="left:824px;top:-1px;width:16px;height:14px;background:#c0c0c0;"></div>
<div style="left:824px;top:-1px;width:16px;height:1px;background:#fff;"></div>
<div style="left:824px;top:-1px;width:1px;height:14px;background:#fff;"></div>
<div style="left:824px;top:12px;width:16px;height:1px;background:#000;"></div>
<div style="left:839px;top:-1px;width:1px;height:14px;background:#000;"></div>
<div style="left:825px;top:11px;width:14px;height:1px;background:#808080;"></div>
<div style="left:838px;top:0px;width:1px;height:12px;background:#808080;"></div>
<svg style="position:absolute;left:790px;top:-1px" width="16" height="14" viewBox="0 0 16 14" shape-rendering="crispEdges"><rect x="4" y="9" width="6" height="2" fill="#000"/></svg>
<svg style="position:absolute;left:806px;top:-1px" width="16" height="14" viewBox="0 0 16 14" shape-rendering="crispEdges"><rect x="3.5" y="2.5" width="8" height="8" fill="none" stroke="#000"/><rect x="3" y="2" width="9" height="2" fill="#000"/></svg>
<svg style="position:absolute;left:824px;top:-1px" width="16" height="14" viewBox="0 0 16 14" shape-rendering="crispEdges"><path d="M4 3 L11 10 M11 3 L4 10" stroke="#000" stroke-width="1.6" shape-rendering="geometricPrecision"/></svg>
<div style="left:187px;top:15px;width:655px;height:1px;background:#fff;"></div>
<div style="left:189px;top:15px;width:1px;height:27px;background:#fff;"></div>
<div style="left:189px;top:41px;width:375px;height:1px;background:#808080;"></div>
<div style="left:563px;top:15px;width:1px;height:27px;background:#808080;"></div>
<div style="left:192px;top:18px;width:1px;height:21px;background:#fff;"></div>
<div style="left:193px;top:18px;width:1px;height:21px;background:#c0c0c0;"></div>
<div style="left:194px;top:18px;width:1px;height:21px;background:#808080;"></div>
<svg style="position:absolute;left:201px;top:20px" width="16" height="17" viewBox="0 0 16 17" shape-rendering="crispEdges"><rect x="0.5" y="0.5" width="14" height="15" fill="#f4f4ec" stroke="#202020"/><path d="M2 2.5h3M7 2.5h3M11 2.5h3M2 5h3M7 5h3M11 5h3M2 7.5h3M2 10h3M2 12.5h3" stroke="#404040" stroke-width="1.2"/><rect x="7" y="7" width="8" height="9" fill="#5c5c2c"/><rect x="9" y="8" width="4" height="3" fill="#e8e8d0"/><rect x="8" y="13" width="6" height="2" fill="#a0a070"/></svg>
<svg style="position:absolute;left:229px;top:20px" width="16" height="17" viewBox="0 0 16 17" shape-rendering="crispEdges"><rect x="0.5" y="0.5" width="14" height="15" fill="#fff" stroke="#303030"/><rect x="2" y="1" width="3" height="14" fill="#e03848"/><path d="M9 2.5h5M9 5h5M9 7.5h5M9 10h5M9 12.5h5M7 2.5h1M7 12.5h1" stroke="#303030" stroke-width="1.2"/><path d="M7 6 L8 8.5 L11 3" stroke="#306030" stroke-width="1.3" fill="none"/></svg>
<div style="left:255px;top:18px;width:1px;height:21px;background:#808080;"></div>
<div style="left:256px;top:18px;width:1px;height:21px;background:#fff;"></div>
<svg style="position:absolute;left:264px;top:20px" width="16" height="16" viewBox="0 0 16 16" shape-rendering="crispEdges"><path d="M1.5 2 L1.5 3 M1.5 5 L1.5 6 M1.5 8 L1.5 9 M1.5 11 L1.5 12 M1.5 14 L1.5 15" stroke="#4848a8" stroke-width="1.6"/><path d="M4 3 L6 1.5 L6 14" stroke="#303090" stroke-width="1.8" fill="none"/><path d="M10.5 1 L10.5 13 M7.5 9.5 L10.5 14 L13.5 9.5" stroke="#303090" stroke-width="2" fill="none"/></svg>
<svg style="position:absolute;left:287px;top:20px" width="16" height="16" viewBox="0 0 16 16" shape-rendering="crispEdges"><rect x="0" y="5" width="9" height="10" fill="#d0d8e8" stroke="#a0b0c8"/><rect x="4.5" y="0.5" width="10" height="10" fill="#6890c8" stroke="#90a8d0"/><path d="M9.5 3 L12 6 L7 6 Z" fill="#e0f0ff"/></svg>
<svg style="position:absolute;left:309px;top:27px" width="6" height="4" viewBox="0 0 6 4" shape-rendering="crispEdges"><path d="M0 0 L5 0 L2.5 3 Z" fill="#000"/></svg>
<svg style="position:absolute;left:320px;top:20px" width="16" height="16" viewBox="0 0 16 16" shape-rendering="crispEdges"><path d="M1 3 L3 3 M1 6 L3 6 M1 9 L3 9 M1 12 L3 12" stroke="#a0a0a0"/><path d="M4 3 L11 3 M4 6 L11 6 M4 9 L11 9 M4 12 L13 12" stroke="#4848a8" stroke-width="2"/><path d="M7 10 L14 2" stroke="#606020" stroke-width="2"/><path d="M7 10 L14 2" stroke="#d0d0a0" stroke-width="0.8"/></svg>
<svg style="position:absolute;left:342px;top:27px" width="6" height="4" viewBox="0 0 6 4" shape-rendering="crispEdges"><path d="M0 0 L5 0 L2.5 3 Z" fill="#000"/></svg>
<div style="left:351px;top:18px;width:1px;height:21px;background:#808080;"></div>
<div style="left:352px;top:18px;width:1px;height:21px;background:#fff;"></div>
<div style="left:358px;top:18px;width:201px;height:21px;background:#fff;"></div>
<div style="left:358px;top:18px;width:200px;height:1px;background:#808080;"></div>
<div style="left:358px;top:18px;width:1px;height:20px;background:#808080;"></div>
<div style="left:359px;top:19px;width:198px;height:1px;background:#c0c0c0;"></div>
<div style="left:359px;top:19px;width:1px;height:18px;background:#c0c0c0;"></div>
<div style="left:358px;top:38px;width:201px;height:1px;background:#fff;"></div>
<div style="left:558px;top:18px;width:1px;height:21px;background:#fff;"></div>
<div style="left:359px;top:37px;width:199px;height:1px;background:#dfdfdf;"></div>
<div style="left:557px;top:19px;width:1px;height:19px;background:#dfdfdf;"></div>
<svg style="position:absolute;left:362px;top:19px" width="18" height="18" viewBox="0 0 18 18" shape-rendering="crispEdges"><rect x="1.5" y="1.5" width="3" height="2" fill="#e8e8b0" stroke="#8a8a50"/><path d="M2 5h1v1h-1zM2 7h1v1h-1zM2 9h1v1h-1zM2 11h1v1h-1zM2 13h1v1h-1zM2 15h1v1h-1zM4 11h1v1h-1zM4 15h1v1h-1z" fill="#000"/><rect x="7.5" y="5.5" width="3" height="2" fill="#c8f0f0" stroke="#508888"/><rect x="5.5" y="10.5" width="3" height="2" fill="#e8e8b0" stroke="#8a8a50"/><rect x="5.5" y="14.5" width="3" height="2" fill="#e8e8b0" stroke="#8a8a50"/><path d="M12.5 4.5 L16 8 M16 4.5 L12.5 8" stroke="#c00050" stroke-width="1.7"/></svg>
<div class="t" style="left:384px;top:22.5px;font-size:10.6px;color:#000;font-weight:normal;">Teilelistenstruktur anzeigen</div>
<div style="left:541px;top:20px;width:16px;height:17px;background:#c0c0c0;"></div>
<div style="left:541px;top:20px;width:16px;height:1px;background:#fff;"></div>
<div style="left:541px;top:20px;width:1px;height:17px;background:#fff;"></div>
<div style="left:541px;top:36px;width:16px;height:1px;background:#000;"></div>
<div style="left:556px;top:20px;width:1px;height:17px;background:#000;"></div>
<div style="left:542px;top:35px;width:14px;height:1px;background:#808080;"></div>
<div style="left:555px;top:21px;width:1px;height:15px;background:#808080;"></div>
<svg style="position:absolute;left:544px;top:26px" width="9" height="5" viewBox="0 0 9 5" shape-rendering="crispEdges"><path d="M0 0 L8 0 L4 4 Z" fill="#000"/></svg>
<div style="left:191px;top:62px;width:650px;height:1px;background:#fff;"></div>
<div style="left:191px;top:62px;width:1px;height:189px;background:#fff;"></div>
<div style="left:191px;top:250px;width:651px;height:1px;background:#000;"></div>
<div style="left:192px;top:249px;width:649px;height:1px;background:#808080;"></div>
<div style="left:841px;top:62px;width:1px;height:189px;background:#000;"></div>
<div style="left:840px;top:63px;width:1px;height:187px;background:#808080;"></div>
<div style="left:282px;top:44px;width:147px;height:1px;background:#fff;"></div>
<div style="left:429px;top:45px;width:1px;height:17px;background:#000;"></div>
<div style="left:428px;top:46px;width:1px;height:16px;background:#808080;"></div>
<svg style="position:absolute;left:284px;top:46px" width="16" height="16" viewBox="0 0 16 16" shape-rendering="crispEdges"><rect x="0" y="0" width="4" height="15" fill="#404020"/><rect x="0" y="0" width="4" height="2" fill="#e0e040"/><rect x="0" y="4" width="4" height="2" fill="#c8c840"/><rect x="0" y="8" width="4" height="2" fill="#c8c840"/><rect x="0" y="12" width="4" height="2" fill="#e0e040"/><rect x="4" y="3" width="12" height="9" fill="#c8c8f8"/><rect x="4" y="1" width="12" height="2" fill="#000080"/><rect x="4" y="5" width="12" height="2" fill="#000080"/><rect x="4" y="9" width="12" height="2" fill="#000080"/><rect x="4" y="13" width="12" height="2" fill="#000080"/></svg>
<div class="t" style="left:306px;top:47px;font-size:10.7px;color:#000;font-weight:normal;">Nur Bauteile (Deaktiviert)</div>
<div style="left:192px;top:43px;width:87px;height:20px;background:#c0c0c0;"></div>
<div style="left:192px;top:43px;width:86px;height:1px;background:#fff;"></div>
<div style="left:191px;top:44px;width:1px;height:19px;background:#fff;"></div>
<div style="left:279px;top:43px;width:1px;height:20px;background:#000;"></div>
<div style="left:278px;top:44px;width:1px;height:19px;background:#808080;"></div>
<svg style="position:absolute;left:199px;top:44px" width="17" height="16" viewBox="0 0 17 16" shape-rendering="crispEdges"><rect x="1" y="3" width="10" height="13" fill="#000080"/><rect x="4" y="7" width="4" height="5" fill="#c8c8d8"/><rect x="10" y="8" width="3" height="3" fill="#000080"/><rect x="0.5" y="0.5" width="4" height="3" fill="#d0d060" stroke="#707030"/><rect x="6.5" y="4.5" width="3" height="2" fill="#d0d060" stroke="#707030"/><rect x="12.5" y="7.5" width="3" height="3" fill="#d0d060" stroke="#707030"/><rect x="4.5" y="12.5" width="4" height="3" fill="#d0d060" stroke="#707030"/></svg>
<div class="t" style="left:222px;top:46px;font-size:10.3px;color:#000;font-weight:normal;">Strukturiert</div>
<div style="left:199px;top:68px;width:635px;height:174px;background:#fff;"></div>
<div style="left:199px;top:68px;width:634px;height:1px;background:#808080;"></div>
<div style="left:199px;top:68px;width:1px;height:173px;background:#808080;"></div>
<div style="left:199px;top:241px;width:635px;height:1px;background:#fff;"></div>
<div style="left:833px;top:68px;width:1px;height:174px;background:#fff;"></div>
<div style="left:199px;top:242px;width:636px;height:1px;background:#fff;"></div>
<div style="left:200px;top:69px;width:16px;height:20px;background:#c0c0c0;overflow:hidden"></div>
<div style="left:200px;top:69px;width:16px;height:1px;background:#fff;"></div>
<div style="left:200px;top:69px;width:1px;height:19px;background:#fff;"></div>
<div style="left:215px;top:69px;width:1px;height:20px;background:#808080;"></div>
<div style="left:200px;top:88px;width:16px;height:1px;background:#808080;"></div>
<div style="left:216px;top:69px;width:66px;height:20px;background:#c0c0c0;overflow:hidden"></div>
<div style="left:216px;top:69px;width:66px;height:1px;background:#fff;"></div>
<div style="left:216px;top:69px;width:1px;height:19px;background:#fff;"></div>
<div style="left:281px;top:69px;width:1px;height:20px;background:#808080;"></div>
<div style="left:216px;top:88px;width:66px;height:1px;background:#808080;"></div>
<div style="left:216px;top:69px;width:65px;height:19px;overflow:hidden"><div class="t" style="left:4px;top:4px;font-size:10.7px">Objekt</div></div>
<div style="left:282px;top:69px;width:99px;height:20px;background:#c0c0c0;overflow:hidden"></div>
<div style="left:282px;top:69px;width:99px;height:1px;background:#fff;"></div>
<div style="left:282px;top:69px;width:1px;height:19px;background:#fff;"></div>
<div style="left:380px;top:69px;width:1px;height:20px;background:#808080;"></div>
<div style="left:282px;top:88px;width:99px;height:1px;background:#808080;"></div>
<div style="left:282px;top:69px;width:98px;height:19px;overflow:hidden"><div class="t" style="left:4px;top:4px;font-size:10.7px">Bauteilnummer</div></div>
<div style="left:381px;top:69px;width:63px;height:20px;background:#c0c0c0;overflow:hidden"></div>
<div style="left:381px;top:69px;width:63px;height:1px;background:#fff;"></div>
<div style="left:381px;top:69px;width:1px;height:19px;background:#fff;"></div>
<div style="left:443px;top:69px;width:1px;height:20px;background:#808080;"></div>
<div style="left:381px;top:88px;width:63px;height:1px;background:#808080;"></div>
<div style="left:381px;top:69px;width:62px;height:19px;overflow:hidden"><div class="t" style="left:4px;top:4px;font-size:10.7px">Material</div></div>
<div style="left:444px;top:69px;width:97px;height:20px;background:#c0c0c0;overflow:hidden"></div>
<div style="left:444px;top:69px;width:97px;height:1px;background:#fff;"></div>
<div style="left:444px;top:69px;width:1px;height:19px;background:#fff;"></div>
<div style="left:540px;top:69px;width:1px;height:20px;background:#808080;"></div>
<div style="left:444px;top:88px;width:97px;height:1px;background:#808080;"></div>
<div style="left:444px;top:69px;width:96px;height:19px;overflow:hidden"><div class="t" style="left:4px;top:4px;font-size:10.7px">Komponententyp</div></div>
<div style="left:541px;top:69px;width:101px;height:20px;background:#c0c0c0;overflow:hidden"></div>
<div style="left:541px;top:69px;width:101px;height:1px;background:#fff;"></div>
<div style="left:541px;top:69px;width:1px;height:19px;background:#fff;"></div>
<div style="left:641px;top:69px;width:1px;height:20px;background:#808080;"></div>
<div style="left:541px;top:88px;width:101px;height:1px;background:#808080;"></div>
<div style="left:541px;top:69px;width:100px;height:19px;overflow:hidden"><div class="t" style="left:4px;top:4px;font-size:10.7px">Teilelistenstruktur</div></div>
<div style="left:642px;top:69px;width:92px;height:20px;background:#c0c0c0;overflow:hidden"></div>
<div style="left:642px;top:69px;width:92px;height:1px;background:#fff;"></div>
<div style="left:642px;top:69px;width:1px;height:19px;background:#fff;"></div>
<div style="left:733px;top:69px;width:1px;height:20px;background:#808080;"></div>
<div style="left:642px;top:88px;width:92px;height:1px;background:#808080;"></div>
<div style="left:642px;top:69px;width:91px;height:19px;overflow:hidden"><div class="t" style="left:4px;top:4px;font-size:10.7px">Einheitenmenge</div></div>
<div style="left:734px;top:69px;width:53px;height:20px;background:#c0c0c0;overflow:hidden"></div>
<div style="left:734px;top:69px;width:53px;height:1px;background:#fff;"></div>
<div style="left:734px;top:69px;width:1px;height:19px;background:#fff;"></div>
<div style="left:786px;top:69px;width:1px;height:20px;background:#808080;"></div>
<div style="left:734px;top:88px;width:53px;height:1px;background:#808080;"></div>
<div style="left:734px;top:69px;width:52px;height:19px;overflow:hidden"><div class="t" style="left:4px;top:4px;font-size:10.7px">ANZAHL</div></div>
<div style="left:787px;top:69px;width:46px;height:20px;background:#c0c0c0;overflow:hidden"></div>
<div style="left:787px;top:69px;width:46px;height:1px;background:#fff;"></div>
<div style="left:787px;top:69px;width:1px;height:19px;background:#fff;"></div>
<div style="left:832px;top:69px;width:1px;height:20px;background:#808080;"></div>
<div style="left:787px;top:88px;width:46px;height:1px;background:#808080;"></div>
<div style="left:787px;top:69px;width:45px;height:19px;overflow:hidden"><div class="t" style="left:4px;top:4px;font-size:10.7px">Lagernummer</div></div>
<div style="left:200px;top:89px;width:16px;height:21px;background:#c0c0c0;"></div>
<div style="left:200px;top:89px;width:15px;height:1px;background:#fff;"></div>
<div style="left:200px;top:89px;width:1px;height:20px;background:#fff;"></div>
<div style="left:200px;top:109px;width:16px;height:1px;background:#808080;"></div>
<div style="left:215px;top:89px;width:1px;height:21px;background:#808080;"></div>
<div style="left:216px;top:109px;width:617px;height:1px;background:#c0c0c0;"></div>
<div style="left:200px;top:110px;width:16px;height:21px;background:#c0c0c0;"></div>
<div style="left:200px;top:110px;width:15px;height:1px;background:#fff;"></div>
<div style="left:200px;top:110px;width:1px;height:20px;background:#fff;"></div>
<div style="left:200px;top:130px;width:16px;height:1px;background:#808080;"></div>
<div style="left:215px;top:110px;width:1px;height:21px;background:#808080;"></div>
<div style="left:216px;top:130px;width:617px;height:1px;background:#c0c0c0;"></div>
<div style="left:200px;top:131px;width:16px;height:21px;background:#c0c0c0;"></div>
<div style="left:200px;top:131px;width:15px;height:1px;background:#fff;"></div>
<div style="left:200px;top:131px;width:1px;height:20px;background:#fff;"></div>
<div style="left:200px;top:151px;width:16px;height:1px;background:#808080;"></div>
<div style="left:215px;top:131px;width:1px;height:21px;background:#808080;"></div>
<div style="left:216px;top:151px;width:617px;height:1px;background:#c0c0c0;"></div>
<div style="left:281px;top:89px;width:1px;height:63px;background:#c0c0c0;"></div>
<div style="left:380px;top:89px;width:1px;height:63px;background:#c0c0c0;"></div>
<div style="left:443px;top:89px;width:1px;height:63px;background:#c0c0c0;"></div>
<div style="left:540px;top:89px;width:1px;height:63px;background:#c0c0c0;"></div>
<div style="left:641px;top:89px;width:1px;height:63px;background:#c0c0c0;"></div>
<div style="left:733px;top:89px;width:1px;height:63px;background:#c0c0c0;"></div>
<div style="left:786px;top:89px;width:1px;height:63px;background:#c0c0c0;"></div>
<div style="left:259px;top:89px;width:1px;height:63px;background:#c0c0c0;"></div>
<div style="left:260px;top:89px;width:21px;height:20px;background:#000080;"></div>
<div style="left:381px;top:89px;width:452px;height:20px;background:#000080;"></div>
<div style="left:380px;top:89px;width:1px;height:20px;background:#c0c0c0;"></div>
<div style="left:443px;top:89px;width:1px;height:20px;background:#c0c0c0;"></div>
<div style="left:540px;top:89px;width:1px;height:20px;background:#c0c0c0;"></div>
<div style="left:641px;top:89px;width:1px;height:20px;background:#c0c0c0;"></div>
<div style="left:733px;top:89px;width:1px;height:20px;background:#c0c0c0;"></div>
<div style="left:786px;top:89px;width:1px;height:20px;background:#c0c0c0;"></div>
<div style="left:282px;top:89px;width:98px;height:20px;background:#fff;box-sizing:border-box;border:1px dotted #000"></div>
<div style="left:284px;top:92px;width:55px;height:13px;background:#000080;"></div>
<svg style="position:absolute;left:205px;top:94px" width="8" height="11" viewBox="0 0 8 11" shape-rendering="crispEdges"><path d="M1.5 0.5 L4.5 0.5 L4.5 6.5 L3 9 L1.5 6.5 Z" fill="#fff" stroke="#000"/><rect x="1" y="6" width="4" height="1" fill="#000"/><rect x="5" y="9" width="2" height="2" fill="#000"/></svg>
<div class="t" style="left:264px;top:93px;font-size:10.7px;color:#fff;font-weight:normal;">1</div>
<div class="t" style="left:264px;top:114px;font-size:10.7px;color:#000;font-weight:normal;">3</div>
<div class="t" style="left:264px;top:135px;font-size:10.7px;color:#000;font-weight:normal;">2</div>
<div class="t" style="left:285px;top:93px;font-size:10.7px;color:#fff;font-weight:normal;">Grundplatte</div>
<div class="t" style="left:285px;top:114px;font-size:10.7px;color:#000;font-weight:normal;">Virtuell2</div>
<div class="t" style="left:285px;top:135px;font-size:10.7px;color:#000;font-weight:normal;">Editierte BTR</div>
<div class="t" style="left:385px;top:93px;font-size:10.7px;color:#9090c8;font-weight:normal;">Standard</div>
<div class="t" style="left:447px;top:93px;font-size:10.7px;color:#9090c8;font-weight:normal;">Part</div>
<div class="t" style="left:447px;top:114px;font-size:10.7px;color:#909090;font-weight:normal;">Virtual</div>
<div class="t" style="left:447px;top:135px;font-size:10.7px;color:#909090;font-weight:normal;">Virtual</div>
<div class="t" style="left:564px;top:93px;font-size:10.7px;color:#fff;font-weight:normal;">Normal</div>
<div class="t" style="left:564px;top:114px;font-size:10.7px;color:#000;font-weight:normal;">Normal</div>
<div class="t" style="left:564px;top:135px;font-size:10.7px;color:#000;font-weight:normal;">Normal</div>
<div class="t" style="left:645px;top:93px;font-size:10.7px;color:#9090c8;font-weight:normal;">Jede</div>
<div class="t" style="left:645px;top:114px;font-size:10.7px;color:#909090;font-weight:normal;">Jede</div>
<div class="t" style="left:645px;top:135px;font-size:10.7px;color:#909090;font-weight:normal;">Jede</div>
<div class="t" style="left:737px;top:93px;font-size:10.7px;color:#fff;font-weight:normal;">1</div>
<div class="t" style="left:737px;top:114px;font-size:10.7px;color:#000;font-weight:normal;">10</div>
<div class="t" style="left:737px;top:135px;font-size:10.7px;color:#000;font-weight:normal;">11</div>
<svg style="position:absolute;left:544px;top:92px" width="17" height="15" viewBox="0 0 17 15" shape-rendering="crispEdges"><rect x="0.5" y="0.5" width="4" height="4" fill="#ffff80" stroke="#fff"/><path d="M2.5 5 L2.5 13.5 M2.5 7.5 L7 7.5 M2.5 10.5 L7 10.5 M2.5 13.5 L7 13.5" stroke="#c0c0ff"/><rect x="7" y="1" width="9" height="14" fill="#000"/><rect x="8" y="2" width="2" height="2" fill="#ffff60"/><rect x="11" y="2" width="4" height="2" fill="#ffff60"/><rect x="8" y="5" width="2" height="2" fill="#fff"/><rect x="11" y="5" width="4" height="2" fill="#ffffa0"/><rect x="8" y="8" width="2" height="2" fill="#fff"/><rect x="11" y="8" width="4" height="2" fill="#ffffa0"/><rect x="8" y="11" width="2" height="3" fill="#ffffa0"/><rect x="11" y="11" width="4" height="3" fill="#ffff60"/></svg>
<svg style="position:absolute;left:544px;top:113px" width="17" height="15" viewBox="0 0 17 15" shape-rendering="crispEdges"><rect x="0.5" y="0.5" width="4" height="4" fill="#ffff80" stroke="#000"/><path d="M2.5 5 L2.5 13.5 M2.5 7.5 L7 7.5 M2.5 10.5 L7 10.5 M2.5 13.5 L7 13.5" stroke="#606060"/><rect x="7" y="1" width="9" height="14" fill="#000"/><rect x="8" y="2" width="2" height="2" fill="#ffff60"/><rect x="11" y="2" width="4" height="2" fill="#ffff60"/><rect x="8" y="5" width="2" height="2" fill="#fff"/><rect x="11" y="5" width="4" height="2" fill="#ffffa0"/><rect x="8" y="8" width="2" height="2" fill="#fff"/><rect x="11" y="8" width="4" height="2" fill="#ffffa0"/><rect x="8" y="11" width="2" height="3" fill="#ffffa0"/><rect x="11" y="11" width="4" height="3" fill="#ffff60"/></svg>
<svg style="position:absolute;left:544px;top:134px" width="17" height="15" viewBox="0 0 17 15" shape-rendering="crispEdges"><rect x="0.5" y="0.5" width="4" height="4" fill="#ffff80" stroke="#000"/><path d="M2.5 5 L2.5 13.5 M2.5 7.5 L7 7.5 M2.5 10.5 L7 10.5 M2.5 13.5 L7 13.5" stroke="#606060"/><rect x="7" y="1" width="9" height="14" fill="#000"/><rect x="8" y="2" width="2" height="2" fill="#ffff60"/><rect x="11" y="2" width="4" height="2" fill="#ffff60"/><rect x="8" y="5" width="2" height="2" fill="#fff"/><rect x="11" y="5" width="4" height="2" fill="#ffffa0"/><rect x="8" y="8" width="2" height="2" fill="#fff"/><rect x="11" y="8" width="4" height="2" fill="#ffffa0"/><rect x="8" y="11" width="2" height="3" fill="#ffffa0"/><rect x="11" y="11" width="4" height="3" fill="#ffff60"/></svg>
<svg style="position:absolute;left:225px;top:99px" width="9" height="43" viewBox="0 0 9 43" shape-rendering="crispEdges"><path d="M0.5 0 L0.5 42.5 M0.5 0.5 L8 0.5 M0.5 21.5 L8 21.5 M0.5 42.5 L8 42.5" stroke="#606060" stroke-dasharray="1 1"/></svg>
<svg style="position:absolute;left:235px;top:92px" width="15" height="14" viewBox="0 0 15 14" shape-rendering="crispEdges"><path d="M0.5 4.5 L4 0.5 L14.5 0.5 L14.5 9.5 L10.5 13.5 L0.5 13.5 Z" fill="#ffff00" stroke="#000"/><path d="M0.5 4.5 L10.5 4.5 L14.5 0.5 M10.5 4.5 L10.5 13.5" stroke="#000" fill="none"/><path d="M11 5 L14 2 L14 9.5 L11 12.5 Z" fill="#c8c800"/><path d="M1 4 L4 1 L14 1 L10 4 Z" fill="#ffff80"/></svg>
<svg style="position:absolute;left:235px;top:112px" width="16" height="17" viewBox="0 0 16 17" shape-rendering="crispEdges"><rect x="0" y="0" width="16" height="17" fill="#e8e8e0"/><defs><linearGradient id="cg2_72" x1="0" y1="0" x2="0.2" y2="1"><stop offset="0" stop-color="#f0f0f8"/><stop offset="1" stop-color="#9898d8"/></linearGradient></defs><path d="M0.5 4.5 L3.5 1.5 L15 1.5 L15 12.5 L12.5 15.5 L0.5 15.5 Z" fill="url(#cg2_72)" stroke="#a8a8b0"/><path d="M0.5 4.5 L12.5 4.5 L15 1.5 M12.5 4.5 L12.5 15.5" stroke="#c0c0c8" fill="none"/></svg>
<svg style="position:absolute;left:235px;top:133px" width="16" height="17" viewBox="0 0 16 17" shape-rendering="crispEdges"><rect x="0" y="0" width="16" height="17" fill="#e8e8e0"/><defs><linearGradient id="cg2_73" x1="0" y1="0" x2="0.2" y2="1"><stop offset="0" stop-color="#f0f0f8"/><stop offset="1" stop-color="#9898d8"/></linearGradient></defs><path d="M0.5 4.5 L3.5 1.5 L15 1.5 L15 12.5 L12.5 15.5 L0.5 15.5 Z" fill="url(#cg2_73)" stroke="#a8a8b0"/><path d="M0.5 4.5 L12.5 4.5 L15 1.5 M12.5 4.5 L12.5 15.5" stroke="#c0c0c8" fill="none"/></svg>
<div style="left:201px;top:225px;width:632px;height:16px;background:#c0c0c0;"></div>
<div style="left:701px;top:225px;width:115px;height:16px;background-image:repeating-conic-gradient(#fff 0 25%,#c0c0c0 0 50%);background-size:2px 2px"></div>
<div style="left:201px;top:225px;width:16px;height:16px;background:#c0c0c0;"></div>
<div style="left:201px;top:225px;width:16px;height:1px;background:#dfdfdf;"></div>
<div style="left:201px;top:225px;width:1px;height:16px;background:#fff;"></div>
<div style="left:201px;top:240px;width:16px;height:1px;background:#808080;"></div>
<div style="left:216px;top:225px;width:1px;height:16px;background:#808080;"></div>
<svg style="position:absolute;left:201px;top:225px" width="16" height="16" viewBox="0 0 16 16" shape-rendering="crispEdges"><path d="M8.5 4 L8.5 11 L5 7.5 Z" fill="#000"/></svg>
<div style="left:217px;top:225px;width:484px;height:16px;background:#c0c0c0;"></div>
<div style="left:217px;top:225px;width:484px;height:1px;background:#dfdfdf;"></div>
<div style="left:217px;top:225px;width:1px;height:16px;background:#fff;"></div>
<div style="left:217px;top:240px;width:484px;height:1px;background:#808080;"></div>
<div style="left:700px;top:225px;width:1px;height:16px;background:#808080;"></div>
<div style="left:816px;top:225px;width:17px;height:16px;background:#c0c0c0;"></div>
<div style="left:816px;top:225px;width:17px;height:1px;background:#dfdfdf;"></div>
<div style="left:816px;top:225px;width:1px;height:16px;background:#fff;"></div>
<div style="left:816px;top:240px;width:17px;height:1px;background:#808080;"></div>
<div style="left:832px;top:225px;width:1px;height:16px;background:#808080;"></div>
<svg style="position:absolute;left:816px;top:225px" width="16" height="16" viewBox="0 0 16 16" shape-rendering="crispEdges"><path d="M6 4 L6 11 L9.5 7.5 Z" fill="#000"/></svg>
<div style="left:701px;top:240px;width:115px;height:1px;background:#808080;"></div>
<div style="left:199px;top:261px;width:28px;height:23px;background:#c0c0c0;"></div>
<div style="left:199px;top:261px;width:28px;height:1px;background:#fff;"></div>
<div style="left:199px;top:261px;width:1px;height:23px;background:#fff;"></div>
<div style="left:199px;top:283px;width:28px;height:1px;background:#000;"></div>
<div style="left:226px;top:261px;width:1px;height:23px;background:#000;"></div>
<div style="left:200px;top:282px;width:26px;height:1px;background:#808080;"></div>
<div style="left:225px;top:262px;width:1px;height:21px;background:#808080;"></div>
<svg style="position:absolute;left:204px;top:264px" width="18" height="18" viewBox="0 0 18 18" shape-rendering="crispEdges"><path d="M2.5 1.5 L14 1.5 L15.5 3 L15.5 14 L14.5 15 L14 17 L11 14.5 L3 14.5 L1.5 13 L1.5 2.5 Z" fill="#ffffc8" stroke="#000" stroke-width="1.5" shape-rendering="geometricPrecision"/><text x="8.8" y="12.5" font-family="Liberation Sans" font-weight="bold" font-size="11.5" fill="#202070" text-anchor="middle">?</text></svg>
<div style="left:754px;top:261px;width:75px;height:23px;background:#c0c0c0;"></div>
<div style="left:754px;top:261px;width:75px;height:1px;background:#fff;"></div>
<div style="left:754px;top:261px;width:1px;height:23px;background:#fff;"></div>
<div style="left:754px;top:283px;width:75px;height:1px;background:#000;"></div>
<div style="left:828px;top:261px;width:1px;height:23px;background:#000;"></div>
<div style="left:755px;top:282px;width:73px;height:1px;background:#808080;"></div>
<div style="left:827px;top:262px;width:1px;height:21px;background:#808080;"></div>
<div class="t" style="left:780px;top:266px;font-size:10.6px;color:#000;font-weight:normal;">Fertig</div>
<svg style="position:absolute;left:828px;top:272px" width="15" height="15" viewBox="0 0 15 15" shape-rendering="crispEdges"><path d="M14 0 L0 14 M14 4 L4 14 M14 8 L8 14" stroke="#fff" stroke-width="1.2" shape-rendering="geometricPrecision"/><path d="M14 1.5 L1.5 14 M14 5.5 L5.5 14 M14 9.5 L9.5 14" stroke="#303030" stroke-width="1.6" shape-rendering="geometricPrecision"/></svg>
</body></html>
